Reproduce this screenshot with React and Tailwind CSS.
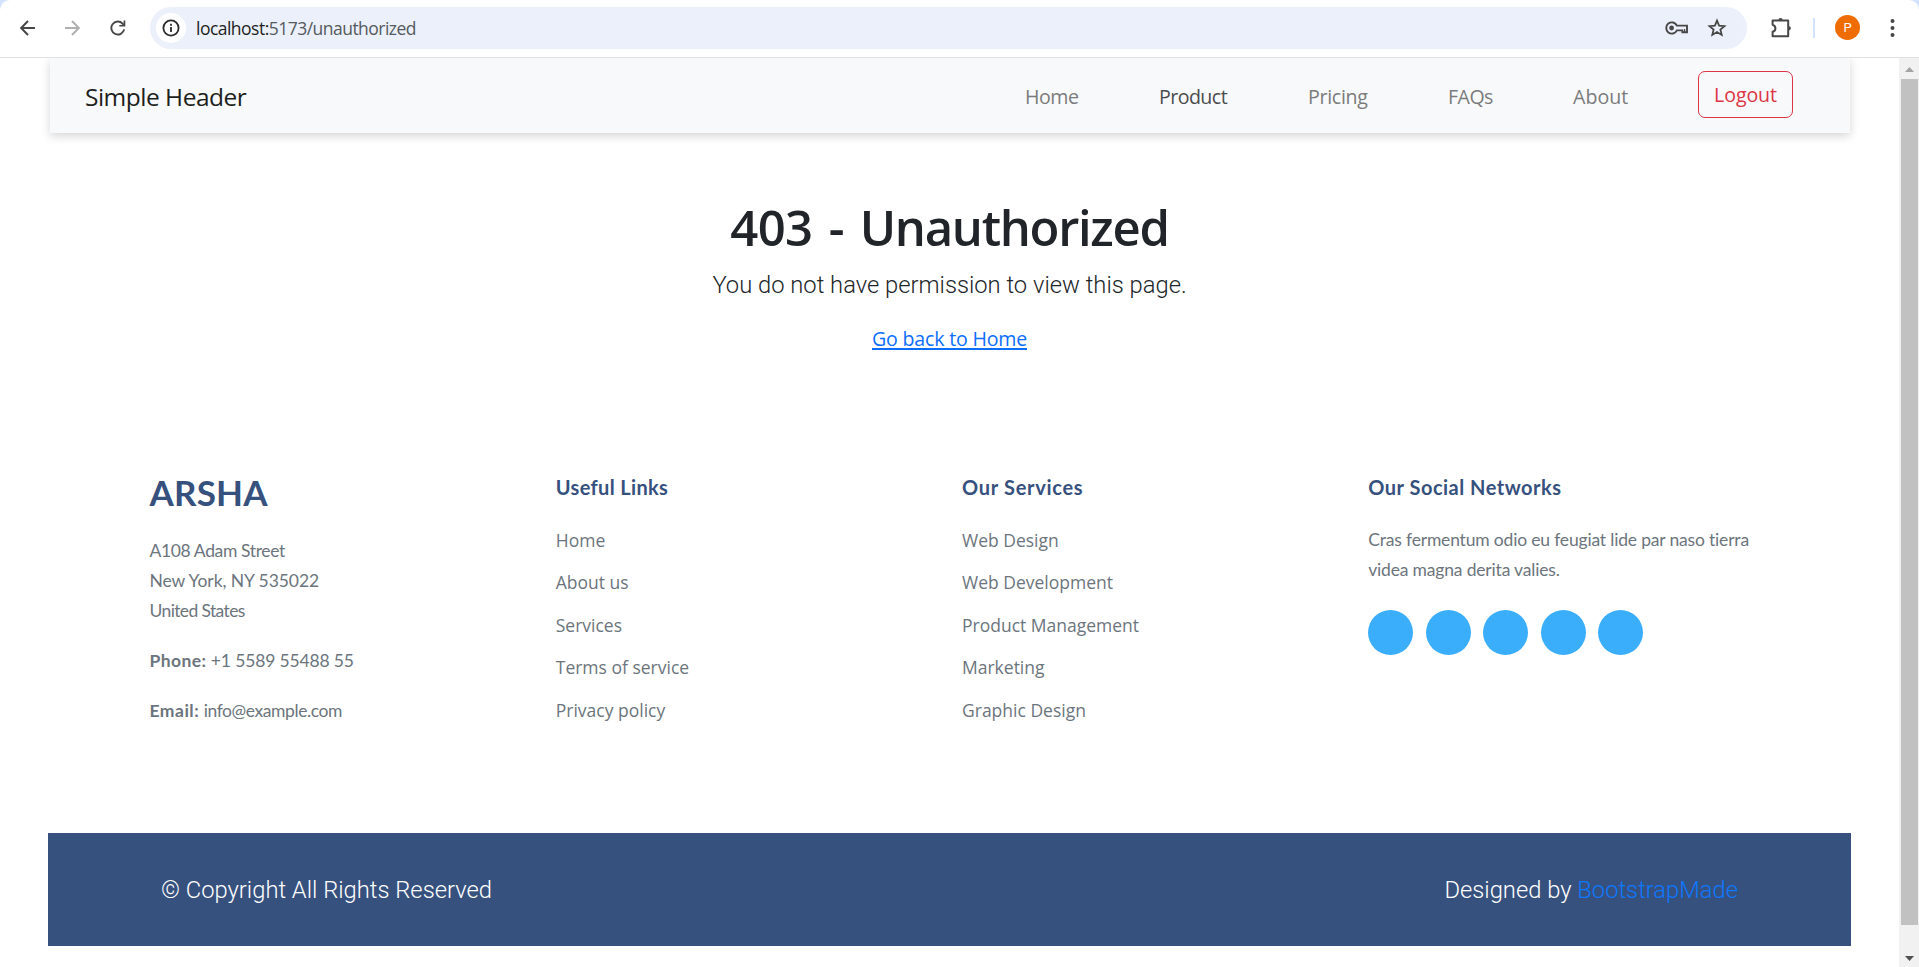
const navItems = [
  { label: "Home", box: "w-[134px]", text: "tracking-[-0.45px] text-[#7b7c7d]" },
  { label: "Product", box: "w-[149px]", text: "tracking-[-0.55px] text-[#4b4c4d]" },
  { label: "Pricing", box: "w-[140px]", text: "tracking-[-0.3px] text-[#7b7c7d]" },
  { label: "FAQs", box: "w-[125px]", text: "tracking-[-0.55px] text-[#7b7c7d]" },
  { label: "About", box: "w-[125px]", text: "tracking-[0px] text-[#7b7c7d]" },
];

const usefulLinks = ["Home", "About us", "Services", "Terms of service", "Privacy policy"];
const services = ["Web Design", "Web Development", "Product Management", "Marketing", "Graphic Design"];

function BrowserBar() {
  return (
    <div className="h-[58px] shrink-0 border-b border-[#dfe1e0] bg-[#d3e3fd]">
      <div className="flex h-full items-center rounded-t-[10px] bg-white pb-[2px]">
        <svg className="ml-[20px] h-4 w-[15px]" viewBox="0 0 15 16" fill="none" stroke="#474747" strokeWidth="2">
          <path d="M15 8H1.6M8 1L1.2 8L8 15" />
        </svg>
        <svg className="ml-[30px] h-4 w-[15px]" viewBox="0 0 15 16" fill="none" stroke="#b0b0b0" strokeWidth="2">
          <path d="M0 8h13.4M7 1l6.8 7L7 15" />
        </svg>
        <svg className="ml-[30px] h-4 w-4" viewBox="0 0 16 16" fill="none" stroke="#474747" strokeWidth="1.9">
          <path d="M14.2 9.4A6.5 6.5 0 1 1 12.6 3.6L14 5" />
          <path d="M15.3 .6V6.6H9.3V5L13.6 4.8V.6z" fill="#474747" stroke="none" />
        </svg>
        <div className="ml-[24px] flex h-[42px] w-[1597px] items-center rounded-full bg-[#ebf0fa]">
          <div className="ml-[6px] flex h-[30px] w-[30px] items-center justify-center rounded-full bg-white">
            <svg className="h-[18px] w-[18px]" viewBox="0 0 18 18" fill="none" stroke="#2b2b2b" strokeWidth="1.8">
              <circle cx="9" cy="9" r="7.6" />
              <path d="M9 8v5M9 4.8v2" />
            </svg>
          </div>
          <span className="ml-[10px] grow whitespace-nowrap font-['Open_Sans',sans-serif] text-[17.5px] leading-6 tracking-[-0.52px] text-[#1f1f1f]">
            localhost:<span className="text-[#555a60]">5173/unauthorized</span>
          </span>
          <svg className="h-[14px] w-[24px]" viewBox="0 0 24 14" fill="none" stroke="#474747" strokeWidth="1.9">
            <path d="M11.9 4.6H22v6.6h-4.6V9.4h-5.5A5.6 5.6 0 1 1 11.9 4.6z" />
            <path d="M19.6 8v3" strokeWidth="1.2" />
            <circle cx="6.6" cy="7" r="2.4" fill="#474747" stroke="none" />
          </svg>
          <svg className="ml-[18px] mr-[20px] h-[20px] w-[20px]" viewBox="0 0 20 20" fill="none" stroke="#474747" strokeWidth="1.8">
            <path d="M10 2.6l2.1 5 5.4.5-4.1 3.5 1.3 5.3-4.7-2.8-4.7 2.8 1.3-5.3L2.5 8.1l5.4-.5z" />
          </svg>
        </div>
        <svg className="ml-[24px] h-[21px] w-[21px]" viewBox="0 0 21 21" fill="none" stroke="#474747" strokeWidth="2">
          <path d="M1.6 3.4h15.6v15.8H1.6v-4.4q2.8-.8 2.8-3.4T1.6 7.8z" strokeLinejoin="round" />
          <path d="M7.4 3a2.1 2.1 0 0 1 4.2 0zM17.8 9.2a2.1 2.1 0 0 1 0 4.2z" fill="#474747" stroke="none" />
        </svg>
        <div className="ml-[21px] h-5 w-[2px] bg-[#d3e3fd]" />
        <div className="ml-[20px] flex h-[25px] w-[25px] items-center justify-center rounded-full bg-[#ef6c00] font-['Roboto',sans-serif] text-[13px] text-white">
          P
        </div>
        <svg className="ml-[30px] h-5 w-[5px]" viewBox="0 0 5 20" fill="#474747">
          <circle cx="2.5" cy="3" r="2" />
          <circle cx="2.5" cy="10" r="2" />
          <circle cx="2.5" cy="17" r="2" />
        </svg>
      </div>
    </div>
  );
}

function Header() {
  return (
    <header className="ml-[2px] mr-px flex h-[75px] items-center bg-[#f8f9fa] pl-[35px] font-['Open_Sans',sans-serif] shadow-[0_3px_9px_rgba(0,0,0,0.17)]">
      <div className="grow whitespace-nowrap pt-[2px] text-[24.5px] leading-9 tracking-[-0.5px] text-[#1d1f20]">
        Simple Header
      </div>
      <nav className="flex pt-[2px] text-[19.6px] leading-[30px]">
        {navItems.map((item) => (
          <a key={item.label} className={`whitespace-nowrap ${item.box} ${item.text}`}>
            {item.label}
          </a>
        ))}
      </nav>
      <button className="mb-[3px] mr-[57px] h-[47px] w-[95px] rounded-[7px] border border-[#dc3545] pt-px text-[19.6px] leading-[30px] tracking-[-0.1px] text-[#dc3545]">
        Logout
      </button>
    </header>
  );
}

function LinkColumn({ title, titleClass, links }) {
  return (
    <div>
      <h4 className={`pt-1 font-['Lato',sans-serif] text-[20px] font-bold leading-6 text-[#37517e] ${titleClass}`}>
        {title}
      </h4>
      <ul className="mt-[19.6px] font-['Open_Sans',sans-serif] text-[17.5px] leading-[42.5px] text-[#6c757d]">
        {links.map((link) => (
          <li key={link}>{link}</li>
        ))}
      </ul>
    </div>
  );
}

function Footer() {
  return (
    <footer>
      <div className="ml-[101.5px] grid h-[260px] w-[1625px] grid-cols-4 font-['Lato',sans-serif] text-[17.5px] leading-[30px] text-[#6c757d]">
        <div>
          <h3 className="pt-px text-[35px] font-bold leading-10 tracking-[0.2px] text-[#37517e]">ARSHA</h3>
          <div className="mt-6 whitespace-nowrap">
            <p className="tracking-[-0.37px]">A108 Adam Street</p>
            <p className="tracking-[-0.08px]">New York, NY 535022</p>
            <p className="tracking-[-0.62px]">United States</p>
            <p className="mt-5">
              <strong className="tracking-[0.4px]">Phone:</strong>{" "}
              <span className="tracking-[-0.15px]">+1 5589 55488 55</span>
            </p>
            <p className="mt-5">
              <strong className="tracking-[0.5px]">Email:</strong>{" "}
              <span className="tracking-[-0.42px]">info@example.com</span>
            </p>
          </div>
        </div>
        <LinkColumn title="Useful Links" titleClass="tracking-[0.35px]" links={usefulLinks} />
        <LinkColumn title="Our Services" titleClass="tracking-[0.7px]" links={services} />
        <div>
          <h4 className="pt-1 text-[20px] font-bold leading-6 tracking-[0.5px] text-[#37517e]">Our Social Networks</h4>
          <p className="mt-[26px] whitespace-nowrap tracking-[-0.18px]">
            Cras fermentum odio eu feugiat lide par naso tierra
            <br />
            videa magna derita valies.
          </p>
          <div className="mt-[25px] flex gap-[12.5px]">
            {[0, 1, 2, 3, 4].map((n) => (
              <a key={n} className="h-[45px] w-[45px] rounded-full bg-[#3baefb]" />
            ))}
          </div>
        </div>
      </div>
      <div className="mt-[102px] flex h-[113px] items-center justify-between bg-[#37517e] px-[113px] pt-px font-['Roboto',sans-serif] text-[23.75px] font-light leading-9 text-white">
        <p>© Copyright All Rights Reserved</p>
        <p>
          Designed by <a className="text-[#0d77fd]">BootstrapMade</a>
        </p>
      </div>
    </footer>
  );
}

function Scrollbar() {
  return (
    <div className="flex w-5 shrink-0 flex-col items-center bg-[#f1f1f1]">
      <svg className="mt-[9px] h-[5px] w-[9px]" viewBox="0 0 9 5" fill="#a3a3a3">
        <path d="M0 5L4.5 0L9 5z" />
      </svg>
      <div className="mt-[7px] h-[846px] w-[17px] bg-[#c1c1c1]" />
      <svg className="mt-[31px] h-[5px] w-[9px]" viewBox="0 0 9 5" fill="#505050">
        <path d="M0 0L4.5 5L9 0z" />
      </svg>
    </div>
  );
}

export default function App() {
  return (
    <div className="flex h-[967px] w-[1919px] flex-col overflow-hidden bg-white">
      <BrowserBar />
      <div className="flex grow">
        <div className="grow overflow-hidden pl-12 pr-12">
          <Header />
          <main className="flex h-[338px] flex-col items-center pt-16 text-center">
            <h1 className="font-['Open_Sans',sans-serif] text-[49px] font-semibold leading-[60px] tracking-[-1.3px] text-[#212529] [word-spacing:5px]">
              <span className="tracking-[-0.65px]">403</span> - Unauthorized
            </h1>
            <p className="mt-[10px] font-['Roboto',sans-serif] text-[23.75px] font-light leading-9 text-[#212529]">
              You do not have permission to view this page.
            </p>
            <a className="mt-[21px] font-['Open_Sans',sans-serif] text-[19.6px] leading-[30px] tracking-[-0.2px] text-[#0d6efd] underline decoration-2 underline-offset-2">
              Go back to Home
            </a>
          </main>
          <Footer />
        </div>
        <Scrollbar />
      </div>
    </div>
  );
}
